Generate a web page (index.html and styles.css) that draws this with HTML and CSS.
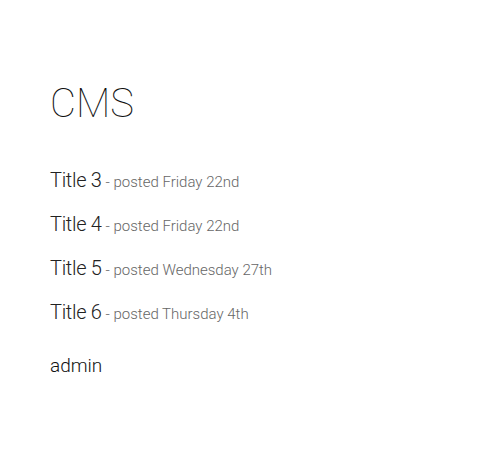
FILE: index.html
```html
<!DOCTYPE html>
<html>
<head>
<meta charset="utf-8">
<link rel="stylesheet" href="styles.css">
</head>
<body>
<div class="page">
  <h1 class="logo">CMS</h1>
  <ul class="posts">
    <li class="post"><span class="title">Title 3</span> <span class="meta">- posted Friday 22nd</span></li>
    <li class="post"><span class="title">Title 4</span> <span class="meta">- posted Friday 22nd</span></li>
    <li class="post"><span class="title">Title 5</span> <span class="meta">- posted Wednesday 27th</span></li>
    <li class="post"><span class="title">Title 6</span> <span class="meta">- posted Thursday 4th</span></li>
  </ul>
  <div class="admin">admin</div>
</div>
</body>
</html>
```
FILE: styles.css
```css
html, body {
  margin: 0;
  padding: 0;
  background: #fff;
}
body {
  font-family: Roboto, "Noto Sans", sans-serif;
  color: #222;
}
.page {
  padding: 78px 50px 0;
}
.logo {
  margin: 0;
  font-weight: 100;
  font-size: 40px;
  line-height: 52px;
  color: #111;
}
.posts {
  list-style: none;
  margin: 38px 0 0;
  padding: 0;
}
.post {
  height: 44px;
  line-height: 24px;
}
.title {
  font-size: 20px;
  font-weight: 300;
  letter-spacing: -0.3px;
  color: #222;
}
.meta {
  font-size: 15px;
  font-weight: 300;
  color: #666;
}
.admin {
  font-size: 19px;
  font-weight: 300;
  color: #111;
  margin-top: 10px;
}
```
